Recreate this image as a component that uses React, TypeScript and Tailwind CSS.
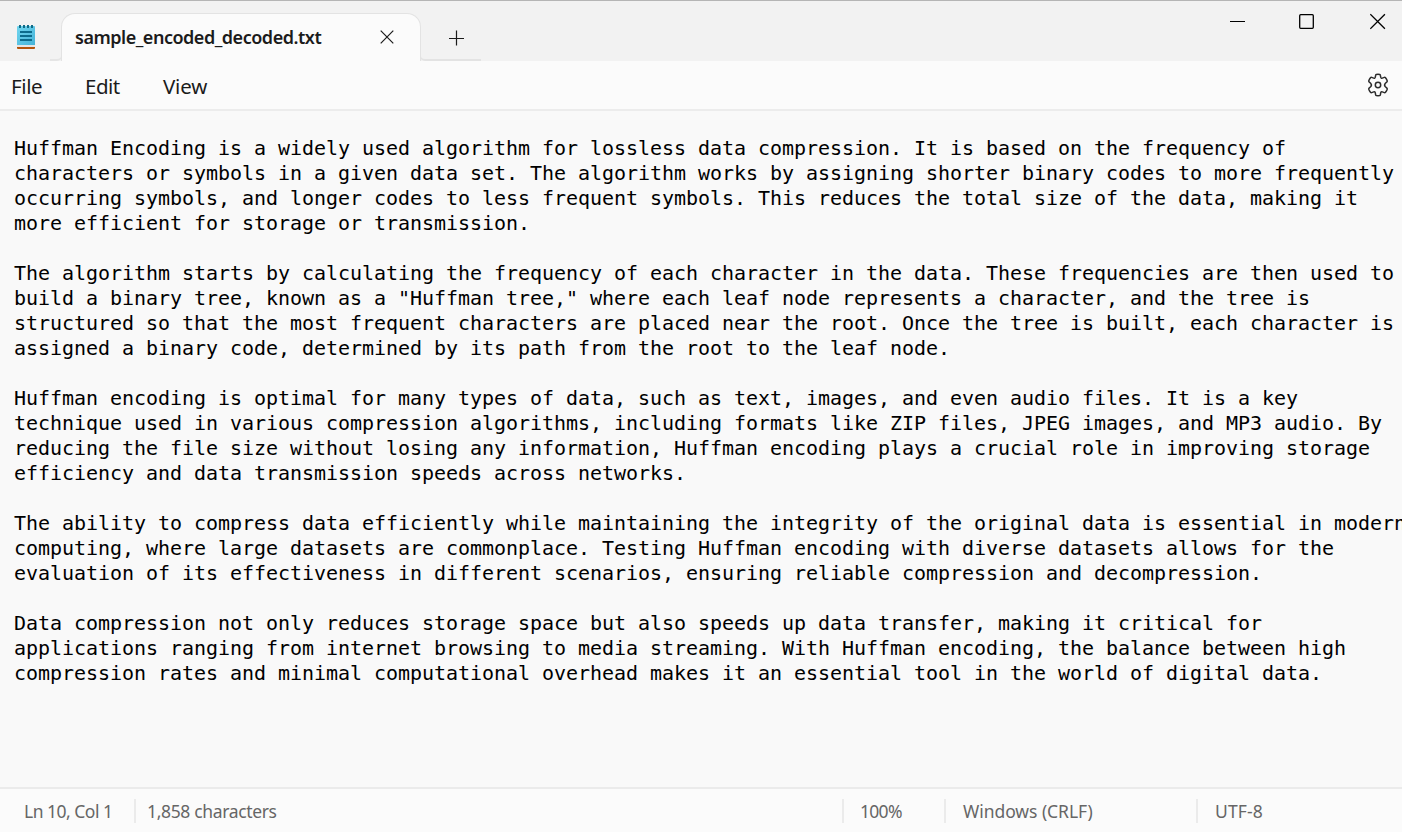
import type { ReactNode } from "react";

const lines: string[] = [
  "Huffman Encoding is a widely used algorithm for lossless data compression. It is based on the frequency of",
  "characters or symbols in a given data set. The algorithm works by assigning shorter binary codes to more frequently",
  "occurring symbols, and longer codes to less frequent symbols. This reduces the total size of the data, making it",
  "more efficient for storage or transmission.",
  "",
  "The algorithm starts by calculating the frequency of each character in the data. These frequencies are then used to",
  "build a binary tree, known as a \"Huffman tree,\" where each leaf node represents a character, and the tree is",
  "structured so that the most frequent characters are placed near the root. Once the tree is built, each character is",
  "assigned a binary code, determined by its path from the root to the leaf node.",
  "",
  "Huffman encoding is optimal for many types of data, such as text, images, and even audio files. It is a key",
  "technique used in various compression algorithms, including formats like ZIP files, JPEG images, and MP3 audio. By",
  "reducing the file size without losing any information, Huffman encoding plays a crucial role in improving storage",
  "efficiency and data transmission speeds across networks.",
  "",
  "The ability to compress data efficiently while maintaining the integrity of the original data is essential in modern",
  "computing, where large datasets are commonplace. Testing Huffman encoding with diverse datasets allows for the",
  "evaluation of its effectiveness in different scenarios, ensuring reliable compression and decompression.",
  "",
  "Data compression not only reduces storage space but also speeds up data transfer, making it critical for",
  "applications ranging from internet browsing to media streaming. With Huffman encoding, the balance between high",
  "compression rates and minimal computational overhead makes it an essential tool in the world of digital data.",
];

function NotepadIcon() {
  return (
    <svg width="18" height="25" viewBox="0 0 18 25">
      <defs>
        <linearGradient id="page" x1="0" y1="0" x2="1" y2="1">
          <stop offset="0" stopColor="#72d6ef" />
          <stop offset="1" stopColor="#45b3d8" />
        </linearGradient>
      </defs>
      <path d="M0 20h18v3a1 1 0 0 1-1 1H1a1 1 0 0 1-1-1z" fill="#b4540c" />
      <path d="M0 19h18v3H0z" fill="#e6e6e6" />
      <path d="M0 2a1 1 0 0 1 1-1h16a1 1 0 0 1 1 1v18H0z" fill="url(#page)" />
      <path d="M3 0v3M7 0v3M11 0v3M15 0v3" stroke="#116a86" strokeWidth="2" />
      <path d="M3 7h12M3 11h12M3 15h12" stroke="#0d6c8c" strokeWidth="1.900" />
    </svg>
  );
}

function GearIcon() {
  return (
    <svg width="24" height="24" viewBox="0 0 24 24" fill="none" stroke="#2b2b2b" strokeWidth="1.500" strokeLinejoin="round">
      <path d="M10.300 1.500Q12 1.200 13.700 1.500Q14.300 1.700 14.400 2.400L14.700 4.200Q15 5.500 16.300 5.100L18.300 4.400Q19 4.200 19.500 4.800Q20.600 6.100 21.200 7.700Q21.400 8.400 20.900 8.900L19.400 10.200Q17.700 12 19.400 13.800L20.900 15.100Q21.400 15.600 21.200 16.300Q20.600 17.900 19.500 19.200Q19 19.800 18.300 19.600L16.300 18.900Q15 18.500 14.700 19.800L14.400 21.600Q14.300 22.300 13.700 22.500Q12 22.800 10.300 22.500Q9.700 22.300 9.600 21.600L9.300 19.800Q9 18.500 7.700 18.900L5.700 19.600Q5 19.800 4.500 19.200Q3.400 17.900 2.800 16.300Q2.600 15.600 3.100 15.100L4.600 13.800Q6.300 12 4.600 10.200L3.100 8.900Q2.600 8.400 2.800 7.700Q3.400 6.100 4.500 4.800Q5 4.200 5.700 4.400L7.700 5.100Q9 5.500 9.300 4.200L9.600 2.400Q9.700 1.700 10.300 1.500Z" />
      <circle cx="12" cy="12" r="2.700" />
    </svg>
  );
}

function StatusCell({ className, children }: { className: string; children: ReactNode }) {
  return (
    <div className={`flex h-6 items-center whitespace-nowrap ${className}`}>
      <span>{children}</span>
    </div>
  );
}

export default function App() {
  return (
    <div className="flex h-[832px] w-[1402px] flex-col overflow-hidden bg-[#f9f9f9] font-['Noto_Sans','Open_Sans',sans-serif] text-[#1b1b1b]">
      <header className="flex h-[61px] shrink-0 border-t border-[#b5b5b5] bg-[#f2f2f2]">
        <div className="flex w-[50px] shrink-0 pt-[24px] pl-[17px]">
          <NotepadIcon />
        </div>
        <div className="mt-[54px] h-[6px] w-[12px] shrink-0 rounded-br-[5px] border-r border-b-2 border-[#e5e5e5]" />
        <div className="-ml-px flex h-[60px] w-[360px] shrink-0 pt-[12px]">
          <div className="flex h-12 w-full rounded-t-[14px] border border-b-0 border-[#e3e3e3] bg-[#fbfbfb]">
            <span className="mt-[9px] ml-[13px] w-[305px] text-[18px] leading-7 font-semibold tracking-[-0.480px]">sample_encoded_decoded.txt</span>
            <svg className="mt-[16px]" width="14" height="14" viewBox="0 0 14 14" stroke="#1b1b1b" strokeWidth="1.200">
              <path d="M.7.7l12.600 12.600M13.300.7L.7 13.300" />
            </svg>
          </div>
        </div>
        <div className="-ml-px flex h-[60px] w-[61px] shrink-0 flex-col justify-end">
          <svg className="mb-[9px] ml-[28px]" width="16" height="16" viewBox="0 0 16 16" stroke="#1b1b1b" strokeWidth="1.200">
            <path d="M8.500 .5v15M1 8.500h15" />
          </svg>
          <div className="h-[6px] w-full rounded-bl-[5px] border-b-2 border-l border-[#e3e3e3]" />
        </div>
        <div className="flex flex-1 justify-end pt-[12px] pr-[16px]">
          <svg className="mr-[53px]" width="16" height="18" viewBox="0 0 16 18" stroke="#000" strokeWidth="1">
            <path d="M0 8.500h15" />
          </svg>
          <svg className="mr-[55px]" width="16" height="18" viewBox="0 0 16 18" fill="none" stroke="#000" strokeWidth="1.300">
            <rect x=".7" y="1.700" width="13.600" height="13.600" rx="1" />
          </svg>
          <svg width="16" height="18" viewBox="0 0 16 18" stroke="#000" strokeWidth="1.300">
            <path d="M.3 1.200l14.600 14.600M14.900 1.200L.3 15.800" />
          </svg>
        </div>
      </header>

      <nav className="flex h-[50px] shrink-0 border-b-2 border-[#ececec] bg-[#fbfbfb] pt-[11px] pl-[11px] text-[20.5px] leading-7">
        <span className="w-[74px] tracking-[-0.400px]">File</span>
        <span className="w-[78px] tracking-[-0.500px]">Edit</span>
        <span className="flex-1 tracking-[-0.200px]">View</span>
        <div className="mt-px mr-3">
          <GearIcon />
        </div>
      </nav>

      <main className="min-h-0 flex-1 overflow-hidden pt-[25px] pl-[14px] font-['DejaVu_Sans_Mono','Liberation_Mono',monospace] text-[20px] leading-[25px] tracking-[-0.041px] text-black">
        {lines.map((line, i) => (
          <div key={i} className="h-[25px] whitespace-pre">
            {line}
          </div>
        ))}
      </main>

      <footer className="flex h-[45px] shrink-0 border-t-2 border-[#ebebeb] bg-[#fbfbfb] pt-[10px] text-[17.5px] text-[#666666]">
        <StatusCell className="w-[134px] pl-[24px] tracking-[-0.500px]">Ln 10, Col 1</StatusCell>
        <StatusCell className="w-[708px] border-l-2 border-[#ebebeb] pl-[11px] tracking-[-0.350px]">1,858 characters</StatusCell>
        <StatusCell className="w-[102px] border-l-2 border-[#ebebeb] pl-[16px] tracking-[-0.700px]">100%</StatusCell>
        <StatusCell className="w-[252px] border-l-2 border-[#ebebeb] pl-[17px] tracking-[-0.050px]">Windows (CRLF)</StatusCell>
        <StatusCell className="flex-1 border-l-2 border-[#ebebeb] pl-[17px] tracking-[0.100px]">UTF-8</StatusCell>
      </footer>
    </div>
  );
}
